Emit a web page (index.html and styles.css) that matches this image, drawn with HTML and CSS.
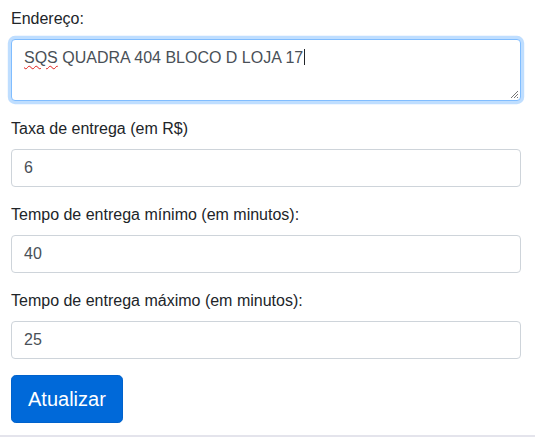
FILE: index.html
```html
<!DOCTYPE html>
<html lang="pt">
<head>
<meta charset="utf-8">
<title>Atualizar</title>
<link rel="stylesheet" href="styles.css">
</head>
<body>
<form class="form">
  <div class="group">
    <label class="label">Endereço:</label>
    <div class="control area focus"><span class="misspelled">SQS</span> QUADRA 404 BLOCO D LOJA 17<span class="caret"></span>
      <svg class="grip" width="9" height="9" viewBox="0 0 9 9"><path d="M8 1 L1 8 M8 4 L4 8 M8 7 L7 8" stroke="#777" stroke-width="1"/></svg>
    </div>
  </div>
  <div class="group">
    <label class="label">Taxa de entrega (em R$)</label>
    <div class="control">6</div>
  </div>
  <div class="group">
    <label class="label">Tempo de entrega mínimo (em minutos):</label>
    <div class="control">40</div>
  </div>
  <div class="group">
    <label class="label">Tempo de entrega máximo (em minutos):</label>
    <div class="control">25</div>
  </div>
  <button type="button" class="btn">Atualizar</button>
</form>
<div class="footer"></div>
</body>
</html>
```
FILE: styles.css
```css
html, body {
  margin: 0;
  padding: 0;
  background: #fff;
}
body {
  font-family: "Liberation Sans", Arial, sans-serif;
  font-size: 16px;
  line-height: 1.5;
  color: #212529;
}
.form {
  padding: 7px 14px 0 11px;
}
.group {
  margin-bottom: 16px;
}
.label {
  display: block;
  margin-bottom: 8px;
}
.control {
  box-sizing: border-box;
  height: 38px;
  padding: 6px 12px;
  border: 1px solid #ced4da;
  border-radius: 4px;
  color: #495057;
  background: #fff;
}
.area {
  position: relative;
  height: 62px;
}
.focus {
  border-color: #80bdff;
  box-shadow: 0 0 0 3.2px rgba(0, 123, 255, 0.25);
}
.misspelled {
  text-decoration: underline wavy #e0201b;
  text-decoration-thickness: 1px;
  text-underline-offset: 2px;
}
.caret {
  display: inline-block;
  width: 1px;
  height: 16px;
  background: #212529;
  vertical-align: -2px;
  margin-left: 1px;
}
.grip {
  position: absolute;
  right: 1px;
  bottom: 1px;
}
.btn {
  display: block;
  font-family: inherit;
  font-size: 20px;
  line-height: 1.5;
  padding: 8px 16px;
  color: #fff;
  background: #0069d9;
  border: 1px solid #0062cc;
  border-radius: 4.8px;
  margin: 0;
}
.footer {
  margin-top: 12px;
  border-top: 2px solid #e4e4ec;
  height: 10px;
}
```
